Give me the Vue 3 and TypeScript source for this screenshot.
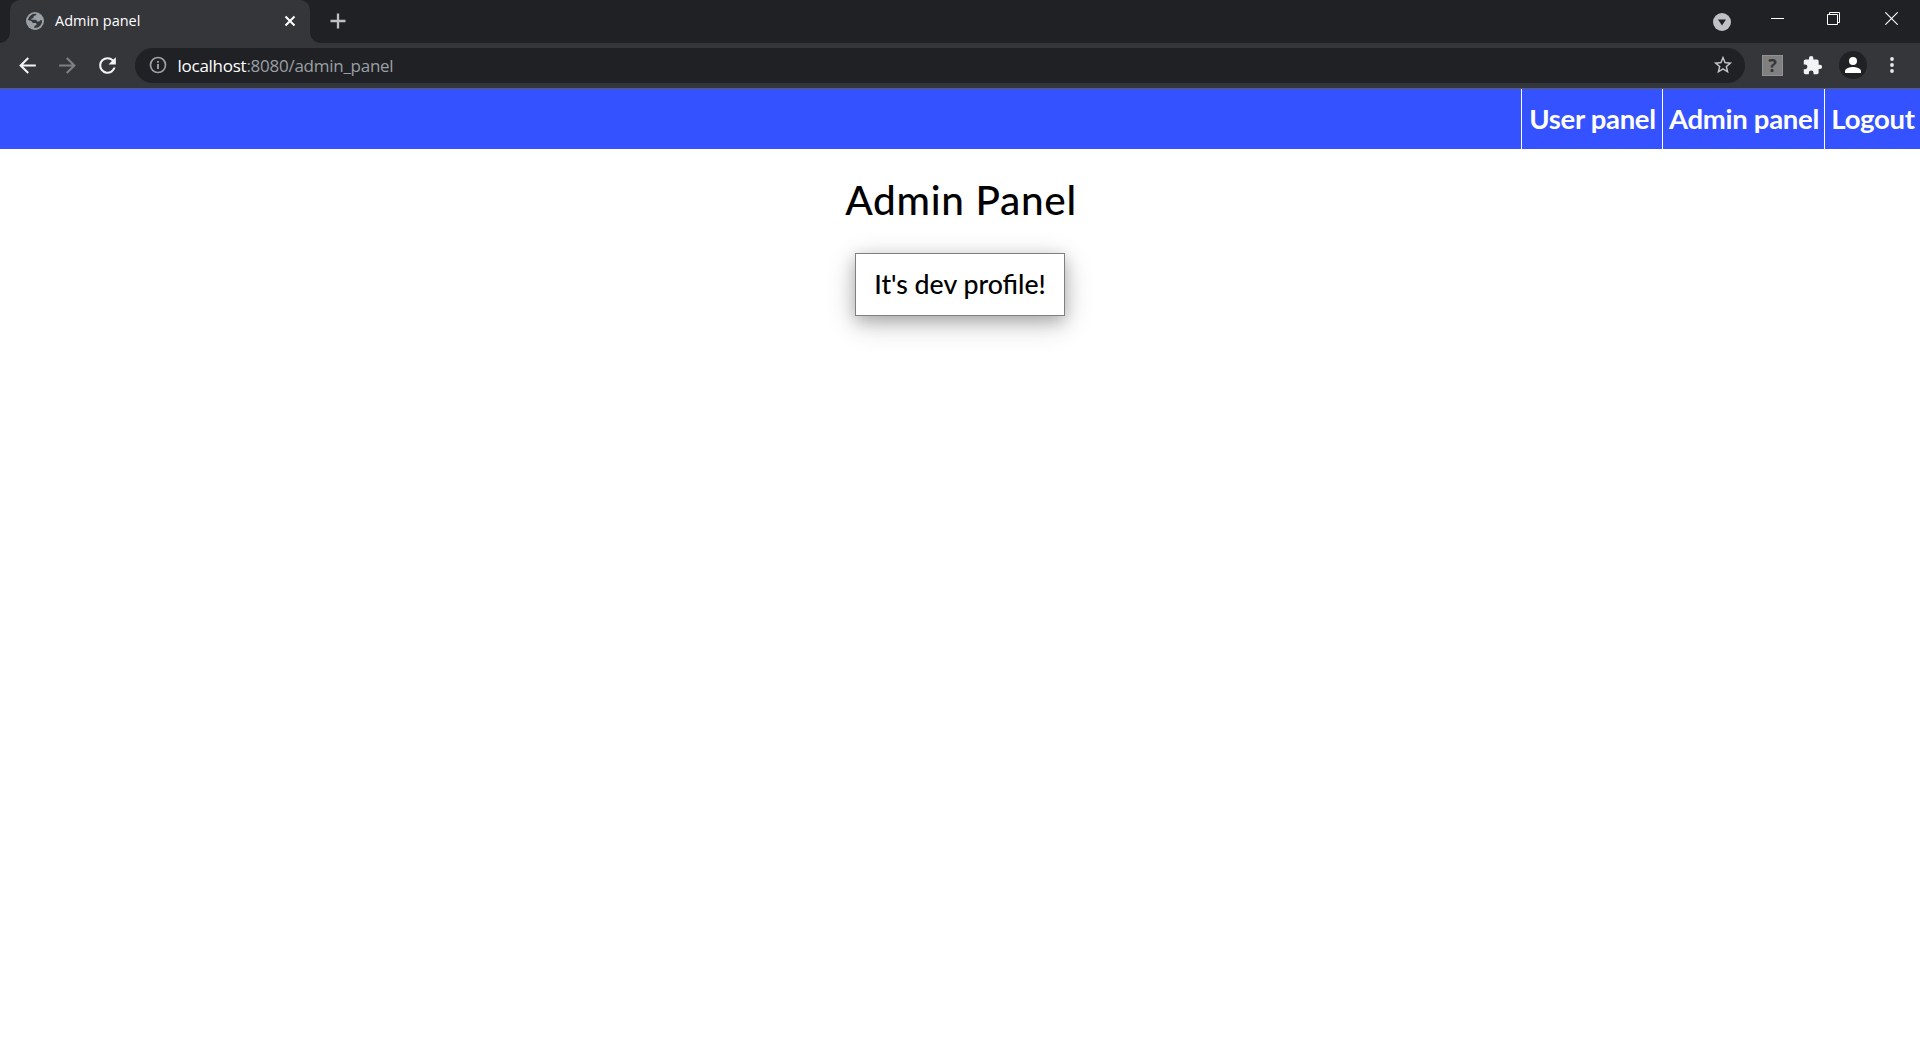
<script setup lang="ts">
const links: { id: string; label: string }[] = [
  { id: 'user', label: 'User panel' },
  { id: 'admin', label: 'Admin panel' },
  { id: 'logout', label: 'Logout' },
]
</script>

<template>
  <div class="window">
    <header class="titlebar">
      <div class="tab">
        <svg class="globe" viewBox="0 0 18 18">
          <circle cx="9" cy="9" r="9" fill="#9aa0a6" />
          <path d="M10.500 2c-.3 1-.9 1.500-2.200 1.800-.8.2-.8 1-.8 1.700 0 .8-.8.9-1.700.9-.7 0-.8.9-.2 1.300h3.700c1.200 0 1.700.9 1.700 1.800h1.300c.9 0 1.600-.5 1.900-1.300h1.900a7.200 7.200 0 0 1-7.700 7.800v-1.300c0-.8.5-1.200 1.100-1.200.9 0 1-.6 1-1.300 0-.8-.5-1.200-1.400-1.200H7.500c-1.300 0-1.800-1-2-1.900L1.900 8A7.200 7.200 0 0 1 10.500 2z" fill="#35363a" />
        </svg>
        <span class="tab-title">Admin panel</span>
        <svg class="tab-close" viewBox="0 0 12 12"><path d="M1.500 1.500l9 9M10.500 1.500l-9 9" stroke="#fff" stroke-width="2" /></svg>
      </div>
      <svg class="plus" viewBox="0 0 16 16"><path d="M8 .5v15M.5 8h15" stroke="#bdc1c6" stroke-width="2.300" /></svg>
      <div class="window-controls">
        <svg class="search-tabs" viewBox="0 0 18 18"><circle cx="9" cy="9" r="9" fill="#bdc1c6" /><path d="M5 6.500h8l-4 6z" fill="#202124" /></svg>
        <svg class="control" viewBox="0 0 13 13"><path d="M0 6.500h13" stroke="#fff" /></svg>
        <svg class="control" viewBox="0 0 13 13"><path d="M.5 2.500h10v10H.5zM2.500 2.500v-2h10v10h-2" fill="none" stroke="#fff" /></svg>
        <svg class="control" viewBox="0 0 13 13"><path d="M.3.3l12.400 12.400M12.700.3L.3 12.700" stroke="#fff" stroke-width="1.100" /></svg>
      </div>
    </header>

    <div class="toolbar">
      <svg class="nav-icon" viewBox="0 0 24 24" fill="#f1f3f4"><path d="M20 11H7.830l5.590-5.590L12 4l-8 8 8 8 1.410-1.410L7.830 13H20z" /></svg>
      <svg class="nav-icon" viewBox="0 0 24 24" fill="#7e8083"><path d="M12 4l-1.410 1.410L16.170 11H4v2h12.170l-5.580 5.590L12 20l8-8z" /></svg>
      <svg class="nav-icon" viewBox="0 0 24 24" fill="#f1f3f4"><path d="M17.650 6.350A7.960 7.960 0 0 0 12 4a8 8 0 1 0 7.730 10h-2.080A6 6 0 1 1 12 6c1.660 0 3.140.69 4.220 1.780L13 11h7V4z" /></svg>
      <div class="address">
        <svg class="info" viewBox="0 0 18 18" fill="none" stroke="#9aa0a6" stroke-width="1.700"><circle cx="9" cy="9" r="7.500" /><path d="M9 8v5M9 5v1.800" stroke-width="1.900" /></svg>
        <span class="url"><b>localhost</b>:8080/admin_panel</span>
        <svg class="star" viewBox="0 0 24 24" fill="#c3c6ca"><path d="M22 9.240l-7.190-.62L12 2 9.190 8.630 2 9.240l5.460 4.730L5.820 21 12 17.270 18.180 21l-1.630-7.030zM12 15.400l-3.760 2.270 1-4.280-3.320-2.880 4.380-.38L12 6.100l1.710 4.040 4.380.38-3.320 2.880 1 4.280z" /></svg>
      </div>
      <div class="extension">?</div>
      <svg class="puzzle" viewBox="0 0 24 24" fill="#f1f3f4"><path d="M20.500 11H19V7c0-1.100-.9-2-2-2h-4V3.500a2.500 2.500 0 0 0-5 0V5H4c-1.100 0-1.990.9-1.990 2v3.800H3.500a2.700 2.700 0 0 1 0 5.400H2V20c0 1.100.9 2 2 2h3.800v-1.500a2.700 2.700 0 0 1 5.400 0V22H17c1.100 0 2-.9 2-2v-4h1.500a2.500 2.500 0 0 0 0-5z" /></svg>
      <div class="avatar">
        <svg viewBox="0 0 24 24" fill="#fff"><path d="M12 12a4 4 0 1 0 0-8 4 4 0 0 0 0 8zm0 2c-2.670 0-8 1.340-8 4v2h16v-2c0-2.660-5.330-4-8-4z" /></svg>
      </div>
      <svg class="dots" viewBox="0 0 4 16" fill="#e8eaed"><circle cx="2" cy="2" r="1.900" /><circle cx="2" cy="8" r="1.900" /><circle cx="2" cy="14" r="1.900" /></svg>
    </div>

    <nav class="site-nav">
      <a v-for="link in links" :key="link.id" :class="link.id">{{ link.label }}</a>
    </nav>

    <main>
      <h1>Admin Panel</h1>
      <button type="button">It's dev profile!</button>
    </main>
  </div>
</template>

<style>
body {
  margin: 0;
  background: #fff;
}
</style>

<style scoped>
.window {
  height: 1042px;
  overflow: hidden;
  font-family: 'Open Sans', 'Noto Sans', sans-serif;
}
svg {
  display: block;
  flex: none;
}
.titlebar {
  display: flex;
  align-items: center;
  height: 43px;
  background: #202124;
}
.tab {
  position: relative;
  box-sizing: border-box;
  display: flex;
  align-items: center;
  width: 300px;
  height: 43px;
  margin-left: 10px;
  padding: 0 14px 0 16px;
  border-radius: 10px 10px 0 0;
  background: #35363a;
}
.tab::before,
.tab::after {
  content: '';
  position: absolute;
  bottom: 0;
  width: 10px;
  height: 10px;
}
.tab::before {
  left: -10px;
  background: radial-gradient(circle at 0 0, #202124 9.500px, #35363a 10px);
}
.tab::after {
  right: -10px;
  background: radial-gradient(circle at 100% 0, #202124 9.500px, #35363a 10px);
}
.globe {
  width: 18px;
  height: 18px;
  margin-top: -1px;
}
.tab-title {
  flex: 1;
  margin: -2px 0 0 11px;
  color: #fff;
  font-size: 14.500px;
  line-height: 20px;
}
.tab-close {
  width: 12px;
  height: 12px;
  margin-top: -1px;
}
.plus {
  width: 16px;
  height: 16px;
  margin: -1px 0 0 19.500px;
}
.window-controls {
  display: flex;
  align-items: center;
  align-self: flex-start;
  margin-left: auto;
  padding-right: 22px;
  height: 37px;
}
.search-tabs {
  width: 18px;
  height: 18px;
  margin: 6px 40px 0 0;
}
.control {
  width: 13px;
  height: 13px;
}
.control + .control {
  margin-left: 43px;
}
.control:last-child {
  margin-left: 45px;
}
.toolbar {
  box-sizing: border-box;
  display: flex;
  align-items: center;
  height: 46px;
  padding: 0 26px 1px 15px;
  border-bottom: 1px solid #5b5c5f;
  background: #35363a;
}
.nav-icon {
  width: 25px;
  height: 25px;
  margin-right: 15px;
}
.address {
  box-sizing: border-box;
  display: flex;
  flex: 1;
  align-items: center;
  height: 35px;
  padding: 0 11.500px 0 13.500px;
  border-radius: 18px;
  background: #202124;
}
.info {
  width: 18px;
  height: 18px;
}
.url {
  flex: 1;
  margin: 2px 0 0 11px;
  color: #9aa0a6;
  font-size: 17px;
  line-height: 24px;
  letter-spacing: -0.260px;
}
.url b {
  color: #fff;
  font-weight: 400;
}
.star {
  width: 22px;
  height: 22px;
}
.extension {
  box-sizing: border-box;
  width: 21px;
  height: 21px;
  margin: 0 18.500px 0 17px;
  border: 1px solid #929292;
  background: #808080;
  color: #35363a;
  font: 700 18px/19px 'Open Sans', sans-serif;
  text-align: center;
}
.puzzle {
  width: 21px;
  height: 21px;
  margin-right: 16px;
}
.avatar {
  display: flex;
  align-items: center;
  justify-content: center;
  width: 28px;
  height: 28px;
  margin-right: 23.500px;
  border-radius: 50%;
  background: #202124;
}
.avatar svg {
  width: 24px;
  height: 24px;
}
.dots {
  width: 4px;
  height: 16px;
}
.site-nav {
  display: flex;
  justify-content: flex-end;
  height: 60px;
  background: #3452ff;
}
.site-nav a {
  box-sizing: border-box;
  padding-left: 1px;
  border-left: 1px solid #fff;
  color: #fff;
  font: 700 27.500px/60px Lato, sans-serif;
  letter-spacing: -0.300px;
  text-align: center;
  white-space: nowrap;
}
.user {
  width: 141px;
}
.admin {
  width: 162px;
}
.logout {
  width: 96px;
}
main {
  display: flex;
  flex-direction: column;
  align-items: center;
  color: #000;
  font-family: Lato, sans-serif;
}
h1 {
  margin: 26px 0 28px;
  padding-left: 2px;
  font-size: 40.500px;
  font-weight: 500;
  line-height: 50px;
  letter-spacing: 0.700px;
}
button {
  box-sizing: border-box;
  width: 210px;
  height: 63px;
  padding: 0 0 2px;
  border: 1px solid #808080;
  background: #fff;
  box-shadow: 0 5px 15px rgba(0, 0, 0, 0.22), 0 7.500px 30px rgba(0, 0, 0, 0.2);
  color: #000;
  font: 500 26.700px/36px Lato, sans-serif;
}
</style>
